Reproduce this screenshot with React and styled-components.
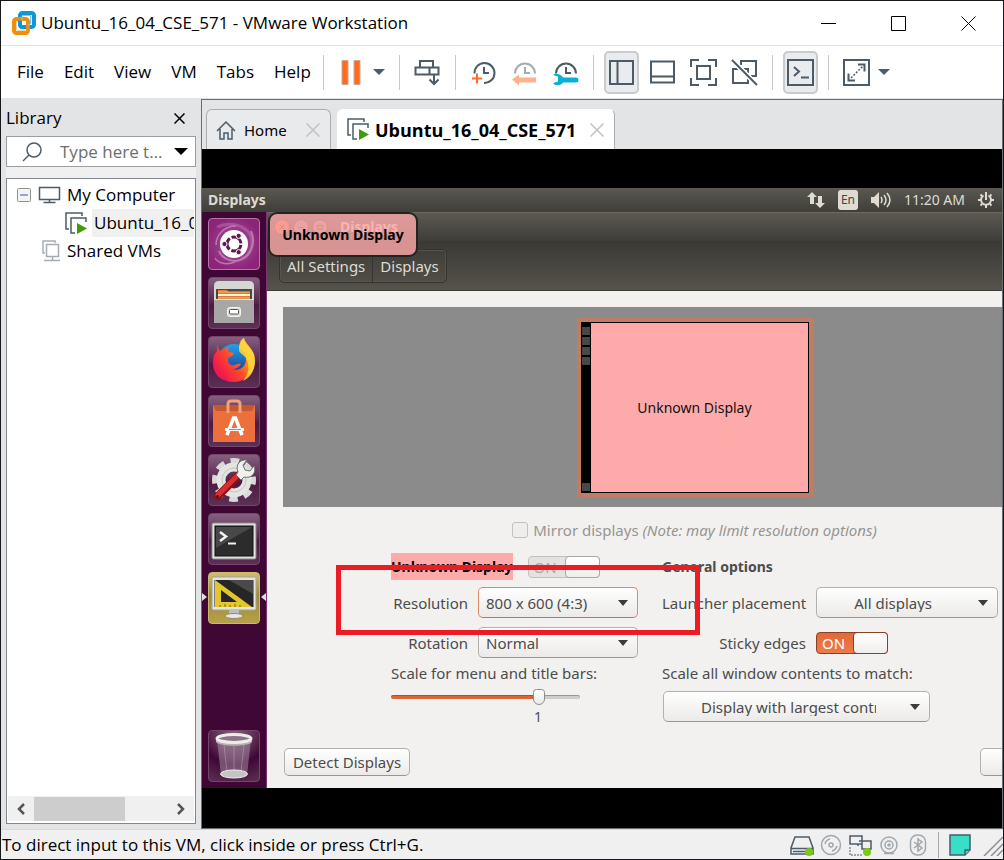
import React from "react";
import styled, { createGlobalStyle, css } from "styled-components";

const segoe = `"Open Sans", "Noto Sans", sans-serif`;
const ubuntu = `"Noto Sans", "Open Sans", sans-serif`;

const Global = createGlobalStyle`
  *, *::before, *::after { box-sizing: border-box; }
  body { margin: 0; font-family: ${segoe}; color: #000; }
  button, input, select { font: inherit; color: inherit; margin: 0; }
  button { padding: 0; border: 0; background: none; }
  svg { display: block; flex: none; }
`;

/* ---------- host window ---------- */

const HostWindow = styled.div`
  display: flex;
  flex-direction: column;
  min-height: 100vh;
  border: 1px solid #16181b;
  background: #e3e4e6;
  overflow: hidden;
`;

const TitleBar = styled.header`
  display: flex;
  align-items: center;
  height: 45px;
  padding: 0 27px 0 10px;
  gap: 5px;
  background: #fff;
  border-bottom: 1px solid #e2e2e2;
`;

const WindowTitle = styled.h1`
  flex: 1;
  margin: 0;
  font-size: 17px;
  line-height: 24px;
  font-weight: 400;
  white-space: nowrap;
`;

const WindowControls = styled.div`
  display: flex;
  gap: 55px;
`;

const ToolBar = styled.div`
  display: flex;
  align-items: center;
  height: 53px;
  background: #fff;
  border-bottom: 1px solid #e2e2e2;
`;

const MenuBar = styled.nav`
  display: flex;
  gap: 20px;
  flex: 0 0 322px;
  padding-left: 16px;
  font-size: 17px;
  line-height: 24px;
`;

const Separator = styled.span`
  flex: none;
  width: 1px;
  height: 35px;
  background: #c8c8c8;
`;

const ToolGroup = styled.div`
  display: flex;
  align-items: center;
  gap: 6px;
  padding: 0 10px;
`;

const ToolButton = styled.button`
  display: flex;
  align-items: center;
  justify-content: center;
  width: 35px;
  height: 43px;
  border-radius: 5px;
  ${(p) =>
    p.$pressed &&
    css`
      background: #e9ebee;
      border: 2px solid #cbcbcb;
    `}
`;

const CaretButton = styled.button`
  display: flex;
  align-items: center;
  justify-content: center;
  width: 20px;
  height: 35px;
  margin-left: -6px;
`;

const Main = styled.div`
  display: flex;
  flex: 1;
`;

/* ---------- library ---------- */

const Library = styled.aside`
  display: flex;
  flex-direction: column;
  flex: 0 0 200px;
  min-width: 0;
  padding: 1px 5px 5px;
  font-size: 17px;
  line-height: 28px;
`;

const LibraryHeader = styled.div`
  display: flex;
  align-items: center;
  justify-content: space-between;
  height: 36px;
  padding-right: 11px;
`;

const LibraryTitle = styled.h2`
  margin: 0;
  font-size: 17px;
  font-weight: 400;
`;

const SearchBox = styled.label`
  display: flex;
  align-items: center;
  gap: 8px;
  height: 31px;
  padding: 0 7px 0 14px;
  background: #fff;
  border: 1px solid #9a9da2;
`;

const SearchInput = styled.input`
  flex: 1;
  min-width: 0;
  padding: 0 0 0 9px;
  border: 0;
  outline: 0;
  background: none;
  line-height: 24px;
  text-overflow: ellipsis;
  &::placeholder { color: #6d6d6d; opacity: 1; }
`;

const LibraryGap = styled.div`
  height: 11px;
  background: #f0f0f0;
`;

const TreeBox = styled.div`
  display: flex;
  flex-direction: column;
  justify-content: space-between;
  flex: 1;
  padding: 2px 1px;
  background: #fff;
  border: 1px solid #82878f;
  overflow: hidden;
`;

const Tree = styled.ul`
  margin: 0;
  padding: 0;
  list-style: none;
`;

const TreeRow = styled.li`
  display: flex;
  align-items: center;
  height: 28px;
  gap: 4px;
  padding-left: ${(p) => p.$indent}px;
  white-space: nowrap;
`;

const TreeLabel = styled.span`
  flex: 1;
  min-width: 0;
  overflow: hidden;
  padding-left: 2px;
  background: ${(p) => (p.$selected ? "#f0f0f0" : "none")};
`;

const ScrollBar = styled.div`
  display: flex;
  align-items: center;
  height: 25px;
  background: #f0f0f0;
`;

const ScrollButton = styled.button`
  display: flex;
  align-items: center;
  justify-content: center;
  width: 26px;
  height: 25px;
`;

const ScrollTrack = styled.div`
  flex: 1;
  height: 24px;
`;

const ScrollThumb = styled.div`
  width: 68%;
  height: 100%;
  background: #cdcdcd;
`;

/* ---------- virtual machine view ---------- */

const Viewer = styled.main`
  display: flex;
  flex-direction: column;
  flex: 1;
  min-width: 0;
  border: 1px solid #6b6e71;
`;

const TabStrip = styled.div`
  display: flex;
  align-items: flex-end;
  gap: 6px;
  height: 49px;
  padding: 0 4px;
`;

const Tab = styled.div`
  display: flex;
  align-items: center;
  height: 40px;
  gap: ${(p) => (p.$active ? 5 : 8)}px;
  padding: 0 10px 0 9px;
  width: ${(p) => (p.$active ? 278 : 125)}px;
  font-family: ${(p) => (p.$active ? segoe : ubuntu)};
  font-size: ${(p) => (p.$active ? 18 : 15)}px;
  line-height: 24px;
  font-weight: ${(p) => (p.$active ? 700 : 400)};
  border: 1px solid ${(p) => (p.$active ? "#fff" : "#adadad")};
  border-right-color: #adadad;
  border-bottom: 0;
  border-radius: 6px 6px 0 0;
  background: ${(p) => (p.$active ? "#fff" : "#e9eaec")};
`;

const TabLabel = styled.button`
  flex: 1;
  text-align: left;
  white-space: nowrap;
`;

const Screen = styled.div`
  display: flex;
  flex: 1;
  padding: 39px 0 40px;
  background: #000;
`;

const Desktop = styled.div`
  position: relative;
  display: flex;
  flex-direction: column;
  flex: 1;
  min-width: 0;
  font-family: ${ubuntu};
  font-size: 14px;
  line-height: 20px;
  color: #4c4c4c;
  overflow: hidden;
`;

const Panel = styled.div`
  display: flex;
  align-items: center;
  height: 24px;
  padding: 0 8px 0 6px;
  gap: 13px;
  color: #dfdbd2;
  background: linear-gradient(#5a5850, #3f3e39);
`;

const PanelTitle = styled.strong`
  flex: 1;
`;

const Keyboard = styled.span`
  width: 20px;
  height: 20px;
  border-radius: 3px;
  background: #dfdbd2;
  color: #45443f;
  font-size: 12px;
  text-align: center;
`;

const Workspace = styled.div`
  display: flex;
  flex: 1;
`;

const Launcher = styled.nav`
  display: flex;
  flex-direction: column;
  gap: 7px;
  flex: 0 0 65px;
  padding: 6px;
  background: #3f0734;
  border-right: 1px solid #7d3571;
`;

const Tile = styled.button`
  position: relative;
  display: flex;
  align-items: center;
  justify-content: center;
  width: 52px;
  height: 52px;
  border-radius: 4px;
  border: 1px solid ${(p) => p.$edge || "#74466b"};
  background: ${(p) => p.$fill || "linear-gradient(#85607e, #5b2a51 45%, #4d1943 55%, #5c3055)"};
  margin-top: ${(p) => (p.$last ? "auto" : "0")};
`;

const Pip = styled.svg`
  position: absolute;
  top: 20px;
  ${(p) => (p.$side === "left" ? "left: -7px;" : "right: -7px;")}
`;

const Dialog = styled.section`
  display: flex;
  flex-direction: column;
  flex: 1;
  min-width: 0;
  overflow: hidden;
`;

const DialogTitle = styled.div`
  display: flex;
  align-items: center;
  gap: 3px;
  height: 29px;
  padding-left: 7px;
  border-top: 1px solid #6b6960;
  background: linear-gradient(#5b5950, #3e3d39);
  color: #dfdbd2;
  font-weight: 700;
`;

const DialogName = styled.span`
  margin-left: 9px;
`;

const RoundButton = styled.button`
  display: flex;
  align-items: center;
  justify-content: center;
  width: 16px;
  height: 16px;
  border-radius: 50%;
  border: 1px solid #2f2e2a;
  background: ${(p) => (p.$close ? "#f2603a" : "#8b8980")};
`;

const DialogBar = styled.div`
  display: flex;
  align-items: flex-start;
  height: 50px;
  padding: 8px 12px;
  background: linear-gradient(#3a3935, #55534a);
  border-bottom: 1px solid #3b3a36;
`;

const Crumbs = styled.div`
  display: flex;
  font-size: 15px;
  border: 1px solid #35342f;
  border-radius: 5px;
  box-shadow: inset 0 0 0 1px #56544c;
`;

const Crumb = styled.button`
  height: 32px;
  padding: 0 7px;
  color: #dfdbd2;
  & + & { border-left: 1px solid #35342f; }
`;

const Notice = styled.div`
  position: absolute;
  top: 24px;
  left: 66px;
  display: flex;
  align-items: center;
  justify-content: center;
  width: 150px;
  height: 45px;
  border: 2px solid #232320;
  border-radius: 9px;
  background: rgba(255, 170, 170, 0.8);
  color: #000;
  font-weight: 700;
`;

/* the dialog is wider than the guest screen, so its body runs past the edge */
const DialogBody = styled.div`
  display: flex;
  flex-direction: column;
  flex: 1;
  width: calc(100% + 120px);
  padding: 16px 16px 12px;
  background: #f2f1f0;
  font-size: 15px;
  line-height: 18px;
`;

const Preview = styled.div`
  display: flex;
  justify-content: center;
  height: 200px;
  padding-top: 11px;
  background: #8b8b8b;
`;

const Monitor = styled.div`
  display: grid;
  grid-template-columns: 10px 1fr 10px;
  width: 236px;
  height: 179px;
  border: 4px solid #c17d64;
  outline: 1px solid #000;
  outline-offset: -5px;
  background: #ffaaaa;
`;

const MiniLauncher = styled.div`
  display: flex;
  flex-direction: column;
  gap: 2px;
  padding: 5px 1px 2px;
  background: #000;
`;

const MiniTile = styled.i`
  height: 8px;
  background: #484848;
  &:last-child { margin-top: auto; }
`;

const MonitorName = styled.span`
  align-self: center;
  text-align: center;
  font-size: 14px;
  color: #111;
`;

const MirrorRow = styled.label`
  display: flex;
  align-items: center;
  justify-content: center;
  gap: 5px;
  height: 24px;
  margin: 11px 0;
  color: #979590;
`;

const CheckBox = styled.input`
  appearance: none;
  width: 16px;
  height: 16px;
  border: 1px solid #c4c2be;
  border-radius: 3px;
  background: #efeeec;
`;

const Settings = styled.div`
  position: relative;
  display: flex;
  justify-content: center;
  gap: 24px;
`;

const Column = styled.div`
  display: flex;
  flex-direction: column;
  width: ${(p) => p.$width}px;
`;

const HeadRow = styled.div`
  display: flex;
  align-items: center;
  gap: 15px;
  height: 27px;
  margin-bottom: 7px;
`;

const Heading = styled.h3`
  margin: 0;
  font-size: 14px;
  line-height: 27px;
  white-space: nowrap;
  color: ${(p) => (p.$marked ? "#000" : "inherit")};
  background: ${(p) => (p.$marked ? "#ffaaaa" : "none")};
`;

const FieldRow = styled.div`
  display: flex;
  align-items: center;
  gap: 10px;
  height: 31px;
  margin-bottom: 9px;
`;

const FieldLabel = styled.label`
  flex: 1;
  text-align: right;
  white-space: nowrap;
`;

const ScaleLabel = styled.label`
  height: 20px;
  margin-top: -3px;
  white-space: nowrap;
`;

const SelectWrap = styled.span`
  position: relative;
  display: block;
  width: ${(p) => p.$width}px;
  ${(p) => p.$spaced && "margin: 7px 0 0 1px;"}
`;

const SelectInput = styled.select`
  appearance: none;
  display: block;
  width: 100%;
  height: 31px;
  padding: 0 ${(p) => (p.$indent ? 53 : 28)}px 0 ${(p) => p.$indent || 7}px;
  border: 1px solid ${(p) => (p.$focus ? "#dd8a68" : "#b3b1ad")};
  border-bottom-color: ${(p) => (p.$focus ? "#cf7048" : "#98968f")};
  border-radius: 5px;
  background: linear-gradient(#fff, #ebeae8);
`;

const SelectArrow = styled.svg`
  position: absolute;
  right: 10px;
  top: 13px;
  pointer-events: none;
`;

const SwitchBox = styled.label`
  position: relative;
  display: flex;
  width: 72px;
  height: 22px;
  border-radius: 4px;
  border: 1px solid ${(p) => (p.$muted ? "#c2c0bc" : "#8c3f22")};
  background: ${(p) => (p.$muted ? "#e4e2e0" : "linear-gradient(#e06a38, #f0794a)")};
  color: ${(p) => (p.$muted ? "#aaa8a4" : "#fff")};
`;

const SwitchInput = styled.input`
  position: absolute;
  inset: 0;
  opacity: 0;
`;

const SwitchText = styled.span`
  flex: 1;
  padding-left: 5px;
  line-height: 20px;
`;

const SwitchKnob = styled.span`
  width: 35px;
  height: 22px;
  margin: -1px;
  border: 1px solid ${(p) => (p.$muted ? "#aaa8a4" : "#8c3f22")};
  border-radius: 4px;
  background: linear-gradient(#fff, #efeeec);
`;

const Range = styled.input`
  appearance: none;
  width: 189px;
  height: 16px;
  margin-top: 5px;
  background: none;
  &::-webkit-slider-runnable-track {
    height: 4px;
    border-radius: 2px;
    background: linear-gradient(90deg, #d9663a 78%, #cfcdca 78%);
    box-shadow: inset 0 1px 0 rgba(90, 40, 20, 0.35);
  }
  &::-webkit-slider-thumb {
    appearance: none;
    width: 12px;
    height: 16px;
    margin-top: -6px;
    border: 1px solid #8f8d88;
    border-radius: 4px 4px 7px 7px;
    background: linear-gradient(#fff, #ebeae8);
  }
`;

const RangeValue = styled.output`
  width: 189px;
  margin-top: 3px;
  padding-left: 143px;
  font-size: 14px;
`;

const Highlight = styled.div`
  position: absolute;
  top: 12px;
  left: 53px;
  width: 364px;
  height: 70px;
  border: 5px solid #ed1c24;
  pointer-events: none;
`;

const DialogFooter = styled.div`
  display: flex;
  justify-content: space-between;
  margin-top: auto;
  padding: 0 0 0 1px;
`;

const PushButton = styled.button`
  width: 126px;
  height: 28px;
  white-space: nowrap;
  border: 1px solid #b3b1ad;
  border-bottom-color: #98968f;
  border-radius: 5px;
  background: linear-gradient(#fff, #ebeae8);
`;

/* ---------- status bar ---------- */

const StatusBar = styled.footer`
  display: flex;
  align-items: center;
  height: 30px;
  gap: 5px;
  padding-left: 1px;
  background: #f0f0f0;
  border-top: 1px solid #d8d9da;
  font-size: 17px;
  line-height: 24px;
`;

const StatusText = styled.span`
  flex: 1;
  white-space: nowrap;
`;

const StatusSeparator = styled.span`
  width: 1px;
  height: 26px;
  margin: 0 4px 0 3px;
  background: #a8a8a8;
`;

/* ---------- drawings ---------- */

const Line = ({ w = 27, h = 27, color = "#4b5b68", sw = 2, children }) => (
  <svg width={w} height={h} viewBox={`0 0 ${w} ${h}`} fill="none" stroke={color} strokeWidth={sw}>
    {children}
  </svg>
);

const Caret = ({ color = "#4b5b68", w = 12 }) => (
  <svg width={w} height={w / 2} viewBox="0 0 12 6" fill={color}><path d="M0 0h12L6 6z" /></svg>
);

const Cross = ({ size = 13, color = "#000", sw = 1 }) => (
  <Line w={size} h={size} color={color} sw={sw}>
    <path d={`M0.500 0.500L${size - 0.5} ${size - 0.5}M${size - 0.5} 0.500L0.500 ${size - 0.5}`} />
  </Line>
);

const VmwareLogo = () => (
  <svg width="25" height="25" viewBox="0 0 25 25" fill="none" strokeWidth="4">
    <rect x="9" y="2" width="14" height="14" rx="2.500" stroke="#0f97d4" />
    <rect x="3" y="8" width="14" height="14" rx="2.500" stroke="#f28c0c" />
    <path d="M9 9.500v4a2.500 2.500 0 0 0 2.500 2.500H15" stroke="#0f97d4" />
    <path d="M11 9.500V5.500a1 1 0 0 1 1-1h7.500v8a1 1 0 0 1-1 1h-1.500" stroke="#7cc6ea" strokeWidth="1" />
    <path d="M7 10.500h-1.500v8a1 1 0 0 0 1 1h7a1 1 0 0 0 1-1" stroke="#fad09a" strokeWidth="1" />
  </svg>
);

const Clock = ({ color = "#4b5b68", partial }) => (
  <>
    <path d={partial ? "M4 14.500a10 10 0 1 1 20 0" : "M4.500 14.500a10 10 0 1 1 9.500 9.500"} stroke={color} />
    <path d="M14 8v6h5" stroke={color} />
  </>
);

const VmIcon = () => (
  <svg width="23" height="23" viewBox="0 0 23 23" fill="none" stroke="#4b5b68" strokeWidth="1.500">
    <path d="M4 17H1V1h16v3" />
    <path d="M10 21H6V6h15v4" />
    <path d="M12 11v11l10-5.500z" fill="#3f9c0c" stroke="none" />
  </svg>
);

const UbuntuIcon = () => (
  <svg width="50" height="50" viewBox="0 0 50 50">
    <g fill="none" stroke="#d9a6cc" opacity="0.600">
      <path d="M8 8c12-6 30-2 34 10 3 10-2 20-10 22" strokeWidth="3" opacity="0.500" />
      <path d="M42 12c6 14-2 28-15 30-8 0-15-4-17-10" strokeWidth="2" />
      <path d="M7 26c0-10 8-19 20-19M26 43c-10 4-18 0-20-4" strokeWidth="1.500" />
    </g>
    <circle cx="25" cy="25" r="14" fill="#fff" />
    <circle cx="25" cy="25" r="7" fill="none" stroke="#5e1750" strokeWidth="3" strokeDasharray="12.660 2" strokeDashoffset="-1" />
    <g fill="#5e1750" stroke="#fff" strokeWidth="1">
      <circle cx="15.500" cy="25" r="2.600" /><circle cx="29.700" cy="16.800" r="2.600" /><circle cx="29.700" cy="33.200" r="2.600" />
    </g>
  </svg>
);

const FilesIcon = () => (
  <svg width="50" height="50" viewBox="0 0 50 50">
    <path d="M5 8q0-5 5-5h30q5 0 5 5v35H5z" fill="#d6d6d4" />
    <path d="M7 11h36v11H7z" fill="#4b4844" />
    <path d="M9 12h9l2 2h21v8H9z" fill="#e07b35" />
    <path d="M9 17h32" stroke="#fff3d8" strokeWidth="2" />
    <path d="M9 14h32M9 20h32" stroke="#f4bc6e" />
    <path d="M5 21h40v24H5z" fill="#a7a7a5" />
    <path d="M5 21.500h40" stroke="#e5e5e3" />
    <rect x="18.500" y="29.500" width="13" height="9" rx="2" fill="#dcdcda" stroke="#f4f4f4" />
    <rect x="20.500" y="31.500" width="9" height="4.500" rx="1" fill="#fff" stroke="#555" />
  </svg>
);

const FirefoxIcon = () => (
  <svg width="50" height="50" viewBox="0 0 50 50">
    <defs>
      <linearGradient id="fox" x1="0.100" y1="0.700" x2="0.900" y2="0.100">
        <stop offset="0" stopColor="#f0184f" /><stop offset="0.400" stopColor="#ff4b2b" />
        <stop offset="0.700" stopColor="#ff9a1c" /><stop offset="1" stopColor="#ffe04a" />
      </linearGradient>
      <linearGradient id="globe" x1="0" y1="0" x2="0" y2="1">
        <stop offset="0" stopColor="#1fa2e8" /><stop offset="1" stopColor="#1a2f8c" />
      </linearGradient>
    </defs>
    <circle cx="25" cy="24" r="17" fill="url(#globe)" />
    <path d="M9 7c0 4 1 6 2 7l4-2c1-1 3-2 5-2-1 2-1 3 0 5l5 1c-1 3-4 4-6 5 0 3 0 5 3 7 4 1 6-2 10-1-2 3-5 5-9 5 9 3 15-4 14-12-1-4-4-7-7-9 0-5 2-9 5-10 1 5 7 9 10 16 4 14-6 28-20 28C11 45 3 36 4 24c0-5 2-8 4-10 0-3 0-5 1-7z" fill="url(#fox)" />
    <path d="M35 3c1 5 7 9 10 16 3 11-2 21-11 25 6-7 7-15 3-23-3-4-7-5-7-8 0-5 2-9 5-10z" fill="#ffd83d" opacity="0.850" />
  </svg>
);

const SoftwareIcon = () => (
  <svg width="50" height="50" viewBox="0 0 50 50">
    <path d="M4 9h42v11H4z" fill="#c4582e" />
    <path d="M4 9l3 6h36l3-6v37H4z" fill="#ec6f3c" />
    <path d="M19 17V8q0-3 3-3h6q3 0 3 3v9" fill="none" stroke="#f0a27c" strokeWidth="3" />
    <g fill="none" stroke="#fff" strokeWidth="3.500"><path d="M18 39l6.500-17h2L33 39" /><path d="M16 33.500h19" strokeWidth="3" /></g>
    <path d="M20 33.500h12" stroke="#ec6f3c" />
  </svg>
);

const SettingsIcon = () => (
  <svg width="50" height="50" viewBox="0 0 50 50">
    <circle cx="25" cy="25" r="19" fill="none" stroke="#d9d9d7" strokeWidth="6" strokeDasharray="8.500 6.420" strokeDashoffset="4" />
    <circle cx="25" cy="25" r="13" fill="none" stroke="#e4e4e2" strokeWidth="9" />
    <circle cx="25" cy="25" r="12" fill="none" stroke="#c5c5c3" />
    <path d="M9 41L31 19" stroke="#8d1014" strokeWidth="8" strokeLinecap="round" />
    <path d="M9 40L30 19" stroke="#da2f2c" strokeWidth="5" strokeLinecap="round" />
    <circle cx="8.500" cy="41.500" r="1.500" fill="#5d0a0a" />
    <path d="M29 17c-3-7 2-13 9-12l-4 5 2 5 5 1 4-5c3 7-3 13-10 11l-3 3-5-5z" fill="#f0f0ee" stroke="#6f6f6d" />
  </svg>
);

const TerminalIcon = () => (
  <svg width="50" height="50" viewBox="0 0 50 50">
    <rect x="3" y="9" width="44" height="36" rx="1.500" fill="#dededc" stroke="#8b8b89" />
    <rect x="6" y="12" width="38" height="30" fill="#2c2c2c" stroke="#111" />
    <path d="M7 13h36L7 34z" fill="#484848" />
    <path d="M11 18l6 4.500-6 4.500" fill="none" stroke="#f2f2f2" strokeWidth="2.500" />
    <path d="M19 29.500h8" stroke="#f2f2f2" strokeWidth="2" />
  </svg>
);

const DisplaysIcon = () => (
  <svg width="50" height="50" viewBox="0 0 50 50">
    <rect x="3" y="4" width="44" height="33" rx="1.500" fill="#e3e3e1" stroke="#a3a29c" />
    <rect x="5.500" y="7" width="39" height="27" fill="#262626" />
    <path d="M20 7h24v14z" fill="#4a4a4a" />
    <path fillRule="evenodd" d="M6 7l37 27H6zM12 17v12h16z" fill="#e2c62e" />
    <path d="M11 34v-2M16 34v-3M21 34v-2M26 34v-3M31 34v-2" stroke="#77650b" />
    <path d="M20 37h10v5H20z" fill="#bdbdbb" />
    <ellipse cx="25" cy="43" rx="9" ry="2.500" fill="#e7e7e5" stroke="#8f8c74" />
  </svg>
);

const TrashIcon = () => (
  <svg width="50" height="50" viewBox="0 0 50 50">
    <path d="M8 9l4 35q13 6 26 0l4-35z" fill="#b9a3b6" opacity="0.450" />
    <path d="M15 14l3 27M25 15v26M35 14l-3 27" stroke="#d9ccd7" opacity="0.350" />
    <ellipse cx="25" cy="43" rx="13.500" ry="4" fill="#c4c4c2" stroke="#eee" />
    <path d="M7 8v3c4 5 32 5 36 0V8" fill="#b4b4b2" />
    <ellipse cx="25" cy="7.500" rx="17" ry="4" fill="#8b7487" stroke="#ececea" strokeWidth="3" />
  </svg>
);

const trashFill = "radial-gradient(circle at 50% 0, #85607e, #5b2a51 40%, #3f0734 60%, #5c3055)";

const launcherItems = [
  { name: "Search", icon: <UbuntuIcon />, fill: "radial-gradient(circle, #a8559a, #8c2579 75%)", edge: "#b577a8" },
  { name: "Files", icon: <FilesIcon /> },
  { name: "Firefox", icon: <FirefoxIcon /> },
  { name: "Software", icon: <SoftwareIcon /> },
  { name: "System Settings", icon: <SettingsIcon /> },
  { name: "Terminal", icon: <TerminalIcon /> },
  { name: "Displays", icon: <DisplaysIcon />, fill: "linear-gradient(#cdbd70, #a08a2c 45%, #b5a14b)", edge: "#c9ba72", active: true },
  { name: "Trash", icon: <TrashIcon />, fill: trashFill, last: true },
];

function Select({ id, value, width, indent, focus, spaced }) {
  return (
    <SelectWrap $width={width} $spaced={spaced}>
      <SelectInput id={id} $indent={indent} $focus={focus}>
        <option>{value}</option>
      </SelectInput>
      <SelectArrow width="10" height="6" viewBox="0 0 10 6" fill="#3c3c3c"><path d="M0 0h10L5 6z" /></SelectArrow>
    </SelectWrap>
  );
}

function Switch({ id, label, muted }) {
  return (
    <SwitchBox $muted={muted}>
      <SwitchInput id={id} type="checkbox" role="switch" aria-label={label} defaultChecked disabled={muted} />
      <SwitchText>ON</SwitchText>
      <SwitchKnob $muted={muted} />
    </SwitchBox>
  );
}

function HostToolBar() {
  return (
    <ToolBar>
      <MenuBar>
        {["File", "Edit", "View", "VM", "Tabs", "Help"].map((m) => <button key={m}>{m}</button>)}
      </MenuBar>
      <Separator />
      <ToolGroup>
        <ToolButton aria-label="Suspend">
          <svg width="21" height="25" viewBox="0 0 21 25" fill="#ff6a1f" stroke="#c9a999"><path d="M1 .5h6v24H1zM13 .5h6v24h-6z" /></svg>
        </ToolButton>
        <CaretButton aria-label="Power options"><Caret /></CaretButton>
      </ToolGroup>
      <Separator />
      <ToolGroup>
        <ToolButton aria-label="Send Ctrl+Alt+Del">
          <Line><path d="M6 8V2h13v6M1.500 8.500h23v7h-23zM15.500 8.500v7M20 15v10M15.500 20.500l4.500 4.500 4.500-4.500" /></Line>
        </ToolButton>
      </ToolGroup>
      <Separator />
      <ToolGroup>
        <ToolButton aria-label="Take snapshot">
          <Line><Clock /><path d="M2 19.500h10M7 14.500v10" stroke="#ff6a1f" /></Line>
        </ToolButton>
        <ToolButton aria-label="Revert snapshot">
          <Line><Clock color="#a5adb3" partial /><path d="M1 20.500l7-5v3h17v5H8v3z" fill="#ffb08c" stroke="none" /></Line>
        </ToolButton>
        <ToolButton aria-label="Manage snapshots">
          <Line><Clock partial /><path d="M1 16l5 1.500v5L1 24c2 3 8 3 10-.5h13a2.500 2.500 0 0 0 0-5H11c-2-4-8-5-10-2.500z" fill="#08b0d4" stroke="none" /></Line>
        </ToolButton>
      </ToolGroup>
      <Separator />
      <ToolGroup>
        <ToolButton $pressed aria-label="Show library"><Line><path d="M2 2h23v23H2zM9.500 2v23" /></Line></ToolButton>
        <ToolButton aria-label="Show thumbnail bar"><Line><path d="M2 2.500h23v21H2zM2 17.500h23" /></Line></ToolButton>
        <ToolButton aria-label="Full screen">
          <Line><path d="M1 8V1h8M18 1h8v7M26 19v7h-8M9 26H1v-7M7 7h13v13H7z" /></Line>
        </ToolButton>
        <ToolButton aria-label="Unity mode">
          <Line><path d="M10 6V2h15v15h-5M7 10H2v14h15v-5M13 10h4v4" /><path d="M1 1l25 25" stroke="#fff" strokeWidth="5" /><path d="M1 1l25 25" /></Line>
        </ToolButton>
      </ToolGroup>
      <Separator />
      <ToolGroup>
        <ToolButton $pressed aria-label="Console view">
          <Line><path d="M1 1h25v25H1z" /><path d="M7 8l5 4.500L7 17M14 18.500h8" /></Line>
        </ToolButton>
      </ToolGroup>
      <Separator />
      <ToolGroup>
        <ToolButton aria-label="Stretch guest">
          <Line><path d="M1 1h25v25H1z" /><path d="M15 5.500h6.500v7M5.500 14.500v7H12" /><path d="M8 19L20 7" strokeWidth="1.500" strokeDasharray="2 1.500" /></Line>
        </ToolButton>
        <CaretButton aria-label="Stretch options"><Caret /></CaretButton>
      </ToolGroup>
    </ToolBar>
  );
}

function LibraryPane() {
  return (
    <Library>
      <LibraryHeader>
        <LibraryTitle>Library</LibraryTitle>
        <button aria-label="Close library"><Cross size={11} sw={1.5} /></button>
      </LibraryHeader>
      <SearchBox>
        <Line w={22} h={20} sw={1.5}><circle cx="13" cy="8" r="7" /><path d="M8 13l-6 6" /></Line>
        <SearchInput placeholder="Type here to search" aria-label="Search library" />
        <Caret color="#000" w={14} />
      </SearchBox>
      <LibraryGap />
      <TreeBox>
        <Tree>
          <TreeRow $indent={9}>
            <svg width="14" height="14" viewBox="0 0 14 14" fill="#f4f4f4" stroke="#919191"><rect x=".5" y=".5" width="13" height="13" rx="1" /><path d="M3 7h8" stroke="#3a57a8" /></svg>
            <Line w={26} h={18} sw={1.5}><path d="M4.500 1.500h20v12h-20zM14.500 13.500v3M8.500 16.500h12" /></Line>
            <TreeLabel>My Computer</TreeLabel>
          </TreeRow>
          <TreeRow $indent={57}>
            <VmIcon />
            <TreeLabel $selected>Ubuntu_16_04_CSE_571</TreeLabel>
          </TreeRow>
          <TreeRow $indent={33}>
            <Line w={20} h={22} color="#a5adb3" sw={1.5}><path d="M4 13H2V1h12v2M5.500 4.500h12v12h-12zM11.500 16.500v4M3 20.500h16" /></Line>
            <TreeLabel>Shared VMs</TreeLabel>
          </TreeRow>
        </Tree>
        <ScrollBar>
          <ScrollButton aria-label="Scroll left"><Line w={10} h={12} color="#555" sw={2.5}><path d="M8 1L3 6l5 5" /></Line></ScrollButton>
          <ScrollTrack><ScrollThumb /></ScrollTrack>
          <ScrollButton aria-label="Scroll right"><Line w={10} h={12} color="#555" sw={2.5}><path d="M2 1l5 5-5 5" /></Line></ScrollButton>
        </ScrollBar>
      </TreeBox>
    </Library>
  );
}

function DisplaysDialog() {
  return (
    <Dialog>
      <DialogTitle>
        <RoundButton $close aria-label="Close"><Cross size={6} color="#3b1a10" /></RoundButton>
        <RoundButton aria-label="Minimize"><Line w={8} h={8} color="#333" sw={1}><path d="M1 4.500h6" /></Line></RoundButton>
        <RoundButton aria-label="Maximize"><Line w={8} h={8} color="#333" sw={1}><path d="M1.500 2.500h5v4h-5z" /></Line></RoundButton>
        <DialogName>Displays</DialogName>
      </DialogTitle>
      <DialogBar>
        <Crumbs><Crumb>All Settings</Crumb><Crumb>Displays</Crumb></Crumbs>
      </DialogBar>
      <DialogBody>
        <Preview>
          <Monitor>
            <MiniLauncher><MiniTile /><MiniTile /><MiniTile /><MiniTile /><MiniTile /></MiniLauncher>
            <MonitorName>Unknown Display</MonitorName>
          </Monitor>
        </Preview>
        <MirrorRow>
          <CheckBox type="checkbox" disabled />
          <span>Mirror displays <em>(Note: may limit resolution options)</em></span>
        </MirrorRow>
        <Settings>
          <Column $width={247}>
            <HeadRow><Heading $marked>Unknown Display</Heading><Switch label="Unknown Display" muted /></HeadRow>
            <FieldRow>
              <FieldLabel htmlFor="resolution">Resolution</FieldLabel>
              <Select id="resolution" value="800 x 600 (4:3)" width={160} focus />
            </FieldRow>
            <FieldRow>
              <FieldLabel htmlFor="rotation">Rotation</FieldLabel>
              <Select id="rotation" value="Normal" width={160} />
            </FieldRow>
            <ScaleLabel htmlFor="scale">Scale for menu and title bars:</ScaleLabel>
            <Range id="scale" type="range" min="0" max="1.25" step="0.125" defaultValue="1" />
            <RangeValue htmlFor="scale">1</RangeValue>
          </Column>
          <Column $width={336}>
            <HeadRow><Heading>General options</Heading></HeadRow>
            <FieldRow>
              <FieldLabel htmlFor="launcher">Launcher placement</FieldLabel>
              <Select id="launcher" value="All displays" width={182} indent={37} />
            </FieldRow>
            <FieldRow>
              <FieldLabel htmlFor="sticky">Sticky edges</FieldLabel>
              <SelectWrap $width={182}><Switch id="sticky" label="Sticky edges" /></SelectWrap>
            </FieldRow>
            <ScaleLabel htmlFor="match">Scale all window contents to match:</ScaleLabel>
            <Select id="match" value="Display with largest controls" width={267} indent={37} spaced />
          </Column>
          <Highlight />
        </Settings>
        <DialogFooter>
          <PushButton>Detect Displays</PushButton>
          <PushButton aria-label="Apply" />
        </DialogFooter>
      </DialogBody>
    </Dialog>
  );
}

function GuestDesktop() {
  return (
    <Desktop>
      <Panel>
        <PanelTitle>Displays</PanelTitle>
        <svg width="18" height="16" viewBox="0 0 18 16" fill="#dfdbd2"><path d="M5 0l5 5H7v7H3V5H0zM13 16l-5-5h3V4h4v7h3z" /></svg>
        <Keyboard>En</Keyboard>
        <svg width="20" height="18" viewBox="0 0 20 18" fill="none" stroke="#dfdbd2" strokeWidth="1.500">
          <path d="M0 6h3l5-5v16l-5-5H0z" fill="#dfdbd2" stroke="none" />
          <path d="M10 6q2 3 0 6M13 4q4 5 0 10M16 2q6 7 0 14" />
        </svg>
        <span>11:20 AM</span>
        <svg width="16" height="16" viewBox="0 0 16 16" fill="none" stroke="#dfdbd2" strokeWidth="2">
          <path d="M5.500 3.500a5 5 0 1 0 5 0M8 0v8" />
          <path d="M0 8h3M13 8h3M8 13v3M2.500 2.500l1.500 1.500M13.500 2.500L12 4M2.500 13.500L4 12M13.500 13.500L12 12" />
        </svg>
      </Panel>
      <Workspace>
        <Launcher>
          {launcherItems.map((t) => (
            <Tile key={t.name} aria-label={t.name} $fill={t.fill} $edge={t.edge} $last={t.last}>
              {t.icon}
              {t.active && (
                <>
                  <Pip $side="left" width="5" height="8" viewBox="0 0 5 8" fill="#ddd"><path d="M0 0l5 4-5 4z" /></Pip>
                  <Pip $side="right" width="5" height="8" viewBox="0 0 5 8" fill="#ddd"><path d="M5 0L0 4l5 4z" /></Pip>
                </>
              )}
            </Tile>
          ))}
        </Launcher>
        <DisplaysDialog />
      </Workspace>
      <Notice>Unknown Display</Notice>
    </Desktop>
  );
}

function HostStatusBar() {
  const dim = "#9fa8ae";
  return (
    <StatusBar>
      <StatusText>To direct input to this VM, click inside or press Ctrl+G.</StatusText>
      <Line w={24} h={22} sw={1.5}><path d="M5 3h14l4 11v6H1v-6zM1 14.500h22M3 17.500h13" /><circle cx="19" cy="18" r="4" fill="#7cc814" stroke="none" /></Line>
      <Line w={24} h={22} color={dim} sw={1.5}><circle cx="12" cy="11" r="9.500" /><circle cx="12" cy="11" r="2" /><path d="M6 10q1-4 5-5M18 12q-1 4-5 5" /></Line>
      <Line w={24} h={22} sw={1.5}><path d="M2 2h12v8H2zM10 10v2M11 7h12v8h-9V9" /><path d="M2 13v8h13" strokeDasharray="2 1" strokeWidth="1" /><circle cx="19" cy="18" r="4" fill="#7cc814" stroke="none" /></Line>
      <Line w={24} h={22} color={dim} sw={1.5}><circle cx="12" cy="11" r="8" /><circle cx="12" cy="11" r="4" /><circle cx="12" cy="11" r="1" /><path d="M7 19.500h10" /></Line>
      <Line w={24} h={22} color={dim} sw={1.5}><rect x="4.500" y="1" width="15" height="20" rx="7" /><path d="M8 8l8 6-4 3V5l4 3-8 6" /></Line>
      <StatusSeparator />
      <Line w={24} h={22} sw={1.5}><path d="M2 1h20v15l-5 5H2z" fill="#36dfc6" /><path d="M17 21v-5h5" fill="#36dfc6" /></Line>
      <Line w={26} h={22} color="#8e8e8e" sw={1.5}><path d="M7 22L26 3M14 22L26 10M20 22l6-6" /></Line>
    </StatusBar>
  );
}

export default function App() {
  return (
    <>
      <Global />
      <HostWindow>
        <TitleBar>
          <VmwareLogo />
          <WindowTitle>Ubuntu_16_04_CSE_571 - VMware Workstation</WindowTitle>
          <WindowControls>
            <button aria-label="Minimize"><Line w={15} h={15} color="#000" sw={1}><path d="M0 7.500h15" /></Line></button>
            <button aria-label="Maximize"><Line w={15} h={15} color="#000" sw={1}><path d="M.5.5h14v14H.5z" /></Line></button>
            <button aria-label="Close"><Cross size={15} /></button>
          </WindowControls>
        </TitleBar>
        <HostToolBar />
        <Main>
          <LibraryPane />
          <Viewer>
            <TabStrip>
              <Tab>
                <Line w={20} h={20} sw={1.5}><path d="M1 11l9-9 9 9M4 9v10h4v-6h4v6h4V9" /></Line>
                <TabLabel>Home</TabLabel>
                <button aria-label="Close Home"><Cross size={14} color="#c2c2c2" sw={1.5} /></button>
              </Tab>
              <Tab $active>
                <VmIcon />
                <TabLabel>Ubuntu_16_04_CSE_571</TabLabel>
                <button aria-label="Close Ubuntu_16_04_CSE_571"><Cross size={14} color="#c2c2c2" sw={1.5} /></button>
              </Tab>
            </TabStrip>
            <Screen><GuestDesktop /></Screen>
          </Viewer>
        </Main>
        <HostStatusBar />
      </HostWindow>
    </>
  );
}
